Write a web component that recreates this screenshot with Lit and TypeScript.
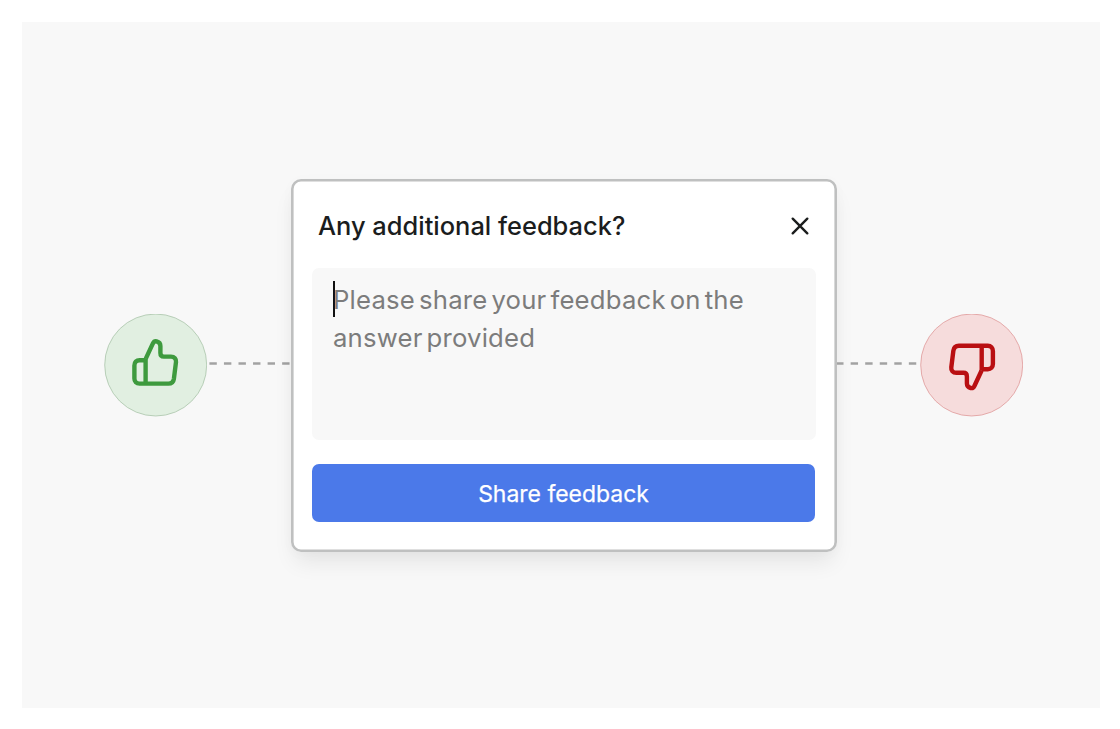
import { LitElement, html, css } from "lit";
import { customElement } from "lit/decorators.js";

@customElement("thumb-badge")
class ThumbBadge extends LitElement {
  static styles = css`
    :host {
      display: block;
      flex: none;
      width: 103px;
      height: 103px;
      color: #3e9a3e;
    }
    :host([down]) {
      color: #b90f12;
    }
    svg {
      display: block;
    }
    .disc {
      fill: #e1efe1;
      stroke: #96b596;
      stroke-width: 0.6;
    }
    :host([down]) .disc {
      fill: #f6dcdc;
      stroke: #d67f80;
    }
    .thumb {
      transform: translate(27.8px, 24.4px);
    }
    :host([down]) .thumb {
      transform: translate(75.5px, 77px) rotate(180deg);
    }
  `;
  render() {
    return html`<svg width="103" height="103" viewBox="0 0 103 103" fill="none">
      <circle class="disc" cx="51.7" cy="51" r="51" />
      <g class="thumb" stroke="currentColor" stroke-width="4.4" stroke-linejoin="round">
        <path d="M14 20.2 L21.1 5 C22 3.2 23.2 2.6 24.8 3 C27.2 3.6 28.6 5.4 28.6 7.6 V14.6 C28.6 16.8 29.8 18.2 32 18.2 H39.2 C42.6 18.2 44.6 20.6 44.2 23.6 L42.1 40.4 C41.6 43.6 39.6 45.2 36.6 45.2 H7.7 C4.6 45.2 2.6 43.2 2.6 40 V27 C2.6 23.8 4.6 21.8 7.7 21.8 H13.8" />
        <path d="M13.8 20.2 V45.2" />
      </g>
    </svg>`;
  }
}

@customElement("app-root")
class AppRoot extends LitElement {
  static styles = css`
    :host {
      display: block;
      box-sizing: border-box;
      height: 729px;
      padding: 22px 20.5px 21px 22px;
      background: #fff;
      font-family: Inter, sans-serif;
    }
    .stage {
      box-sizing: border-box;
      display: flex;
      align-items: center;
      height: 686px;
      padding-left: 82px;
      background: #f8f8f8;
    }
    .line {
      display: block;
      flex: none;
      width: 83px;
      height: 3px;
      margin-top: -3px;
    }
    .left {
      width: 82px;
      margin-left: 2px;
    }
    .card {
      flex: none;
      box-sizing: border-box;
      width: 545.5px;
      height: 373px;
      margin-right: 0.5px;
      padding: 19px 21px;
      border-radius: 10px;
      background: #fff;
      box-shadow: inset 0 0 0 2.6px #bfc0c0, 0 14px 22px -4px rgba(0, 0, 0, 0.08), 0 2px 14px rgba(0, 0, 0, 0.025);
    }
    .head {
      display: flex;
      align-items: center;
      justify-content: space-between;
      height: 56px;
      padding: 0 5px 0 6px;
      color: #1b1d1d;
      font-size: 25.45px;
      font-weight: 500;
    }
    .close {
      margin-right: 1.5px;
    }
    .field {
      box-sizing: border-box;
      height: 172px;
      margin-top: 14px;
      padding: 13px 21px;
      border-radius: 7px;
      background: #f8f8f8;
      color: #7c7c7c;
      font-size: 25.7px;
      line-height: 38px;
      letter-spacing: 0.2px;
      word-spacing: -3.4px;
      white-space: nowrap;
    }
    .caret {
      float: left;
      width: 2px;
      height: 36px;
      margin-right: -2px;
      background: #111;
    }
    .share {
      display: block;
      width: 503px;
      height: 58px;
      margin-top: 24.5px;
      padding: 2px 0 0;
      border: 0;
      border-radius: 7px;
      background: #4b79e9;
      color: #fff;
      font: 400 22.95px Inter, sans-serif;
      -webkit-text-stroke: 0.25px #fff;
    }
  `;
  dashes(side: string, offset: number) {
    return html`<svg class="line ${side}" height="3"><path d="M0 1.5H81" stroke="#a2a2a2" stroke-width="2.6" stroke-dasharray="7.4 7.15" stroke-dashoffset=${offset} /></svg>`;
  }
  render() {
    return html`<div class="stage">
      <thumb-badge></thumb-badge>
      ${this.dashes("left", -0.4)}
      <div class="card">
        <div class="head">
          <span class="title">Any additional feedback?</span>
          <svg class="close" width="18" height="18" viewBox="0 0 18 18" fill="none" stroke="currentColor" stroke-width="2.4" stroke-linecap="round"><path d="M1.7 1.7L16.3 16.3M16.3 1.7L1.7 16.3" /></svg>
        </div>
        <div class="field"><span class="caret"></span><span class="l1">Please share your feedback on the</span><br /><span class="l2">answer provided</span></div>
        <button class="share">Share feedback</button>
      </div>
      ${this.dashes("right", 0.9)}
      <thumb-badge down></thumb-badge>
    </div>`;
  }
}
